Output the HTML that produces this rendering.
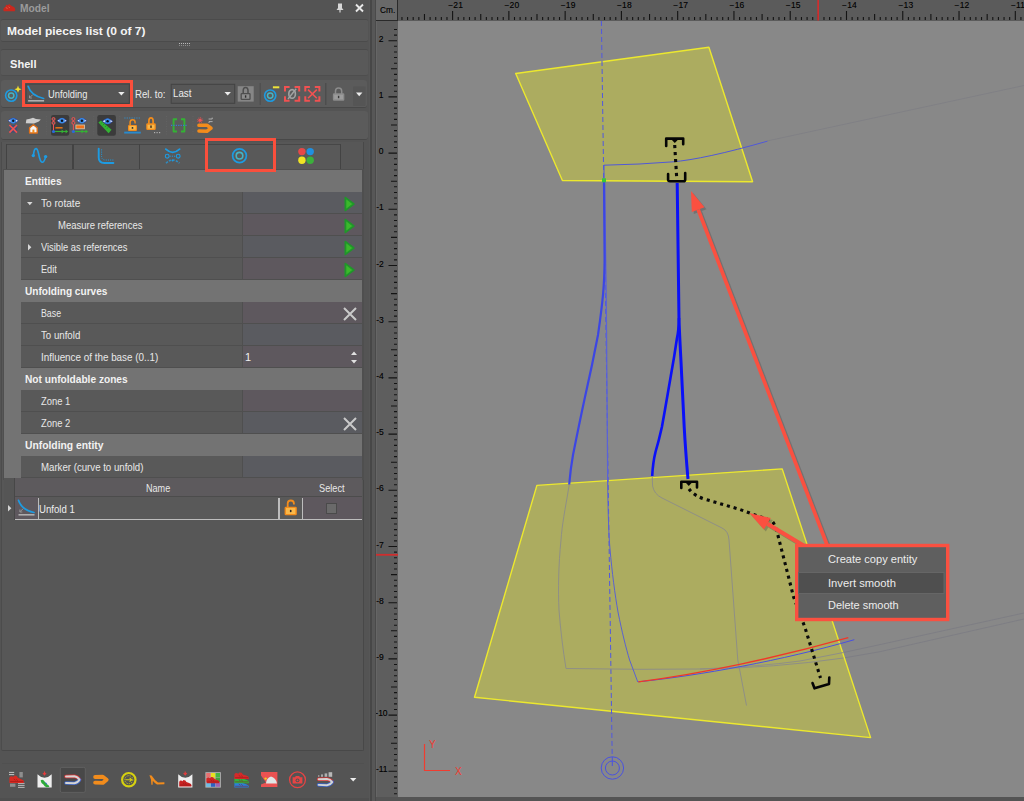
<!DOCTYPE html>
<html>
<head>
<meta charset="utf-8">
<title>Model</title>
<style>
html,body{margin:0;padding:0;}
body{width:1024px;height:801px;overflow:hidden;background:#535353;position:relative;
 font-family:"Liberation Sans",sans-serif;font-size:11px;color:#e6e6e6;}
.abs{position:absolute;}
svg{overflow:visible;}
#left{position:absolute;left:0;top:0;width:369px;height:801px;background:#545454;overflow:hidden;}
.t{position:absolute;white-space:nowrap;line-height:14px;height:14px;transform-origin:0 50%;}
#view{position:absolute;left:376px;top:0;width:648px;height:801px;background:#888888;overflow:hidden;}
</style>
</head>
<body>
<div id="left">
<svg class="abs" style="left:2.5px;top:2.6px" width="12.8" height="9.1" viewBox="0 0 14 10"><path d="M0.5 8.5 Q0 5 2.5 4.5 L3.5 2 L5.5 2.5 L6.5 1 L8.5 2.5 L10 3.5 Q13.5 4.5 13.5 7.5 L13 9 L1 9 Z" fill="#c8281e"/><path d="M3 5 L5 6 M6 4 L7.5 5.5" stroke="#e86a5a" stroke-width="0.8" fill="none"/></svg>
<div class="t" style="left:20px;top:1px;font-weight:bold;color:#9b9b9b;transform:scaleX(0.928);">Model</div>
<svg class="abs" style="left:335px;top:3px" width="10" height="11" viewBox="0 0 10 11"><path d="M3 0.5 H7 V5 L8.5 7 H1.5 L3 5 Z" fill="#d8d8d8"/><path d="M5 7 V9.6" stroke="#d8d8d8" stroke-width="1.2"/></svg>
<svg class="abs" style="left:355px;top:4px" width="9" height="8" viewBox="0 0 9 8"><path d="M1 0.5 L8 7.5 M8 0.5 L1 7.5" stroke="#e8e8e8" stroke-width="1.9" fill="none"/></svg>
<div class="abs" style="left:1px;top:19px;width:367px;height:23px;background:#595959;border-top:1px solid #4b4b4b;border-bottom:1px solid #4b4b4b;box-sizing:border-box;border-radius:2px;"></div>
<div class="t" style="left:6.5px;top:24px;font-weight:bold;color:#f4f4f4;transform:scaleX(1.089);">Model pieces list (0 of 7)</div>
<svg class="abs" style="left:179px;top:43px" width="12" height="3" viewBox="0 0 12 3"><rect x="0" y="0" width="1" height="1" fill="#b8b8b8"/><rect x="0" y="2" width="1" height="1" fill="#8a8a8a"/><rect x="2" y="0" width="1" height="1" fill="#b8b8b8"/><rect x="2" y="2" width="1" height="1" fill="#8a8a8a"/><rect x="4" y="0" width="1" height="1" fill="#b8b8b8"/><rect x="4" y="2" width="1" height="1" fill="#8a8a8a"/><rect x="6" y="0" width="1" height="1" fill="#b8b8b8"/><rect x="6" y="2" width="1" height="1" fill="#8a8a8a"/><rect x="8" y="0" width="1" height="1" fill="#b8b8b8"/><rect x="8" y="2" width="1" height="1" fill="#8a8a8a"/><rect x="10" y="0" width="1" height="1" fill="#b8b8b8"/><rect x="10" y="2" width="1" height="1" fill="#8a8a8a"/></svg>
<div class="abs" style="left:1px;top:49px;width:367px;height:27px;background:#595959;border-top:1px solid #4b4b4b;border-bottom:1px solid #4e4e4e;box-sizing:border-box;border-radius:2px;"></div>
<div class="t" style="left:10px;top:57px;font-weight:bold;color:#f4f4f4;transform:scaleX(1.008);">Shell</div>
<div class="abs" style="left:1px;top:80px;width:365.5px;height:28px;background:#5b5b5b;border-radius:3px;border-bottom:1px solid #484848;box-sizing:border-box;"></div>
<div class="abs" style="left:1px;top:111px;width:366.5px;height:29px;background:#5b5b5b;border-radius:3px;border-bottom:1px solid #484848;box-sizing:border-box;"></div>
<svg class="abs" style="left:0;top:0" width="369" height="801" viewBox="0 0 369 801"><circle cx="11.2" cy="95.6" r="5.6" fill="none" stroke="#1d9be2" stroke-width="1.6"/><circle cx="11.2" cy="95.6" r="2.7" fill="none" stroke="#45b4c4" stroke-width="1.5"/><path d="M18 85.6 L19 88.2 L21.6 89.2 L19 90.2 L18 92.8 L17 90.2 L14.4 89.2 L17 88.2 Z" fill="#f0e030"/><rect x="26" y="84" width="103.3" height="19.4" fill="#555555" stroke="#434343" stroke-width="1"/><path d="M28.1 86.3 Q31.1 95.8 43.6 98.5" fill="none" stroke="#1d9be2" stroke-width="1.7" stroke-linecap="round"/><path d="M28.1 100.8 H44.1" stroke="#b4b4b4" stroke-width="1.5"/><path d="M32.7 94.7 L29.700000000000003 97.7 M29.5 95.5 V98.0 H31.900000000000002" stroke="#9a9a9a" stroke-width="0.9" fill="none"/><path d="M118.2 92.0 H124.60000000000001 L121.4 95.6 Z" fill="#ececec"/><rect x="171.2" y="84.3" width="63.5" height="19" fill="#575757" stroke="#434343" stroke-width="1"/><path d="M224.5 92.0 H230.89999999999998 L227.7 95.6 Z" fill="#ececec"/><rect x="237.7" y="86.2" width="16" height="15.4" fill="#868686"/><path d="M243.2 93.89999999999999 V90.6 a2.4000000000000004 3.1 0 0 1 4.800000000000001 0 V93.89999999999999" fill="none" stroke="#4e4e4e" stroke-width="1.5"/><rect x="241.2" y="93.6" width="8.8" height="5.8" rx="0.6" fill="#8e8e8e" stroke="#4e4e4e" stroke-width="1.3"/><rect x="244.9" y="95.3" width="1.4" height="2.4" fill="#303030"/><path d="M260.2 83 V105" stroke="#4c4c4c" stroke-width="1"/><circle cx="270.2" cy="95.6" r="5.6" fill="none" stroke="#1d9be2" stroke-width="1.6"/><circle cx="270.2" cy="95.6" r="2.7" fill="none" stroke="#45b4c4" stroke-width="1.5"/><rect x="272.9" y="86.3" width="6.4" height="2" fill="#eee43a"/><path d="M285 91.6 V87 H289.6 M294.59999999999997 87 H299.2 V91.6 M299.2 96.2 V100.8 H294.59999999999997 M289.6 100.8 H285 V96.2" fill="none" stroke="#f05252" stroke-width="2"/><ellipse cx="292.1" cy="93.9" rx="3.3" ry="4.3" fill="none" stroke="#a2a2a2" stroke-width="1.6"/><path d="M288 99 L296.2 88.8" stroke="#a2a2a2" stroke-width="1.4"/><path d="M305.3 91.6 V87 H309.90000000000003 M314.79999999999995 87 H319.4 V91.6 M319.4 96.2 V100.8 H314.79999999999995 M309.90000000000003 100.8 H305.3 V96.2" fill="none" stroke="#f05252" stroke-width="2"/><path d="M308 89.6 L316.8 98.3 M316.8 89.6 L308 98.3" stroke="#f05252" stroke-width="1.6"/><path d="M325.8 83 V105" stroke="#484848" stroke-width="1"/><path d="M335.5 94.3 V91 a3.0999999999999996 3.1 0 0 1 6.199999999999999 0 V94.3" fill="none" stroke="#8c8c8c" stroke-width="1.5"/><rect x="333.5" y="94" width="10.2" height="6.0" rx="0.6" fill="#9c9c9c" stroke="#8c8c8c" stroke-width="1.3"/><rect x="337.90000000000003" y="95.8" width="1.4" height="2.4" fill="#3a3a3a"/><rect x="353" y="86.5" width="12.5" height="19.5" fill="#555555" rx="1"/><path d="M356.0 92.60000000000001 H362.4 L359.2 96.2 Z" fill="#ececec"/><path d="M7.8999999999999995 120.8 Q13.2 114.91 18.5 120.8 Q13.2 126.69 7.8999999999999995 120.8 Z" fill="#2c4fb4"/><path d="M8.5 120.8 l2.2 -1.3 v2.6 z M17.9 120.8 l-2.2 -1.3 v2.6 z" fill="#e8eef8"/><circle cx="13.2" cy="120.8" r="2.6" fill="#3b8de6"/><circle cx="13.2" cy="120.8" r="1.2" fill="#101018"/><rect x="9.6" y="125" width="7.6" height="7.6" fill="#2c4688" opacity="0.55"/><path d="M9.4 125 L17 132.6 M17 125 L9.4 132.6" stroke="#f05252" stroke-width="1.7"/><path d="M25.8 123.3 L26.4 119.6 L30 118.8 L33 117.8 L36 119 L40.8 119.4 L38.8 121.6 L34 123.4 Z" fill="#cdcdcd"/><path d="M29.6 133 V127.8 L33.4 124.8 L37.2 127.8 V133 Z" fill="#f4f4f4" stroke="#e0701a" stroke-width="1.4" stroke-linejoin="round"/><rect x="32.4" y="129.6" width="2" height="3.4" fill="#f28c1c"/><path d="M46.7 116 V135" stroke="#666666" stroke-width="1" stroke-dasharray="1 1.5" opacity="0.7"/><rect x="51" y="115.1" width="18.2" height="20.6" rx="2.2" fill="#3b3b3b"/><path d="M53.5 119 V131.5" stroke="#f05252" stroke-width="1"/><circle cx="53.5" cy="119" r="1.5" fill="#585858" stroke="#f05252" stroke-width="1"/><circle cx="53.5" cy="122.9" r="1.5" fill="#585858" stroke="#f05252" stroke-width="1"/><path d="M56.9 120.7 Q62 115.0 67.1 120.7 Q62 126.4 56.9 120.7 Z" fill="#2c4fb4"/><path d="M57.5 120.7 l2.2 -1.3 v2.6 z M66.5 120.7 l-2.2 -1.3 v2.6 z" fill="#e8eef8"/><circle cx="62" cy="120.7" r="2.6" fill="#3b8de6"/><circle cx="62" cy="120.7" r="1.2" fill="#101018"/><path d="M55.4 127.8 H62.6" stroke="#d8701a" stroke-width="1.6"/><path d="M55 131.5 H67.6" stroke="#34b234" stroke-width="1.1"/><path d="M61.6 129.6 L64 131.5 L61.6 133.4 Z M65.6 129.6 L68 131.5 L65.6 133.4 Z" fill="#34b234"/><circle cx="53.5" cy="131.5" r="1.6" fill="#2a6ad8"/><path d="M73.4 119 V131.5" stroke="#f05252" stroke-width="1"/><circle cx="73.4" cy="119" r="1.5" fill="#585858" stroke="#f05252" stroke-width="1"/><circle cx="73.4" cy="122.9" r="1.5" fill="#585858" stroke="#f05252" stroke-width="1"/><path d="M76.80000000000001 120.7 Q81.9 115.0 87.0 120.7 Q81.9 126.4 76.80000000000001 120.7 Z" fill="#2c4fb4"/><path d="M77.4 120.7 l2.2 -1.3 v2.6 z M86.4 120.7 l-2.2 -1.3 v2.6 z" fill="#e8eef8"/><circle cx="81.9" cy="120.7" r="2.6" fill="#3b8de6"/><circle cx="81.9" cy="120.7" r="1.2" fill="#101018"/><rect x="75.9" y="125" width="8.6" height="3.8" fill="#f0721a" stroke="#d8c8b0" stroke-width="0.8"/><path d="M74.9 131.5 H87.5" stroke="#34b234" stroke-width="1.1"/><path d="M81.5 129.6 L83.9 131.5 L81.5 133.4 Z M85.5 129.6 L87.9 131.5 L85.5 133.4 Z" fill="#34b234"/><circle cx="73.4" cy="131.5" r="1.6" fill="#2a6ad8"/><path d="M93.8 116 V135" stroke="#666666" stroke-width="1" stroke-dasharray="1 1.5" opacity="0.7"/><rect x="97.3" y="115.1" width="18.6" height="20.6" rx="2.2" fill="#3b3b3b"/><path d="M98.4 122.6 L100.9 120.6 L111.6 129.8 L108.6 133.3 Z" fill="#34b234"/><path d="M101 123.6 l1.2 -1.4 M103 125.3 l1.2 -1.4 M105 127 l1.2 -1.4 M107 128.7 l1.2 -1.4" stroke="#1c7a1c" stroke-width="0.7"/><path d="M102.1 121.2 Q107.6 115.12 113.1 121.2 Q107.6 127.28 102.1 121.2 Z" fill="#2c4fb4"/><path d="M102.69999999999999 121.2 l2.2 -1.3 v2.6 z M112.5 121.2 l-2.2 -1.3 v2.6 z" fill="#e8eef8"/><circle cx="107.6" cy="121.2" r="2.6" fill="#3b8de6"/><circle cx="107.6" cy="121.2" r="1.2" fill="#101018"/><path d="M119.8 116 V135" stroke="#666666" stroke-width="1" stroke-dasharray="1 1.5" opacity="0.7"/><path d="M124.2 118 H140.8" stroke="#3a86b8" stroke-width="1.2" stroke-dasharray="1.4 1"/><path d="M130.1 125.4 V122.30000000000001 a2.5 2.6 0 0 1 5 0 V123.5" fill="none" stroke="#f28c1c" stroke-width="1.5"/><rect x="128.6" y="125.5" width="7.8" height="4.8" rx="0.6" fill="#f9b84a" stroke="#f28c1c" stroke-width="1.2"/><circle cx="132.5" cy="127.9" r="0.9" fill="#2a2a2a"/><path d="M124.2 132.6 H140.8" stroke="#2a8acc" stroke-width="1.9"/><path d="M148.9 124.3 V121 a2.0999999999999996 3.1 0 0 1 4.199999999999999 0 V124.3" fill="none" stroke="#f28c1c" stroke-width="1.7"/><rect x="146.9" y="124" width="8.2" height="5.4" rx="0.6" fill="#f9b84a" stroke="#f28c1c" stroke-width="1.3"/><rect x="150.3" y="125.5" width="1.4" height="2.4" fill="#3a2a1a"/><rect x="154" y="132" width="1.2" height="1.2" fill="#b0b0b0"/><rect x="156.5" y="132" width="1.2" height="1.2" fill="#b0b0b0"/><rect x="159" y="132" width="1.2" height="1.2" fill="#b0b0b0"/><path d="M166.5 116 V135" stroke="#666666" stroke-width="1" stroke-dasharray="1 1.5" opacity="0.7"/><path d="M177 119.3 H173.6 V131.5 H177 M181 119.3 H184.4 V131.5 H181" fill="none" stroke="#34b234" stroke-width="1.9" stroke-linejoin="round"/><path d="M171 125.4 H187.4" stroke="#3a7ad0" stroke-width="1.1" stroke-dasharray="1.2 1.2"/><path d="M193 116 V135" stroke="#666666" stroke-width="1" stroke-dasharray="1 1.5" opacity="0.7"/><circle cx="200.1" cy="120.2" r="1.7" fill="#f05252"/><circle cx="200.1" cy="120.2" r="2.6" fill="none" stroke="#f05252" stroke-width="0.8" stroke-dasharray="1 1"/><path d="M208.6 119 h3.6 v-1.4 M212.6 121.6 h-3.6 v1.4" stroke="#b8b8b8" stroke-width="0.9" fill="none"/><path d="M198.95 125.35000000000001 L206.92 125.15 L211.04999999999998 128.20000000000002 L206.92 131.25 L198.95 131.05" fill="none" stroke="#f28c1c" stroke-width="3.5" stroke-linejoin="round" stroke-linecap="round"/></svg>
<div class="t" style="left:47.7px;top:87px;color:#ececec;transform:scaleX(0.848);">Unfolding</div>
<div class="t" style="left:134.7px;top:87px;color:#ececec;transform:scaleX(0.875);">Rel. to:</div>
<div class="t" style="left:172.6px;top:86px;color:#ececec;transform:scaleX(0.885);">Last</div>
<div class="abs" style="left:1px;top:142px;width:361.3px;height:608px;background:#575757;border-right:1px solid #484848;border-bottom:1px solid #484848;border-left:1px solid #4c4c4c;border-radius:0 0 2px 2px;"></div>
<div class="abs" style="left:6px;top:144px;width:334px;height:27px;background:#595959;border-top:1px solid #474747;box-sizing:border-box;"></div>
<div class="abs" style="left:5.5px;top:144px;width:1.5px;height:27px;background:#434343;"></div>
<div class="abs" style="left:72.0px;top:144px;width:1.5px;height:27px;background:#434343;"></div>
<div class="abs" style="left:138.5px;top:144px;width:1.5px;height:27px;background:#434343;"></div>
<div class="abs" style="left:205.5px;top:144px;width:1.5px;height:27px;background:#434343;"></div>
<div class="abs" style="left:272.5px;top:144px;width:1.5px;height:27px;background:#434343;"></div>
<div class="abs" style="left:339.5px;top:144px;width:1.5px;height:27px;background:#434343;"></div>
<svg class="abs" style="left:0;top:0" width="369" height="801" viewBox="0 0 369 801"><path d="M33.4 155.6 C33.8 150 35 148.4 36.2 148.6 C38.2 149 38.4 154 39.6 158 C40.6 161.6 41.6 162.6 42.6 162.2 C44 161.6 45 159.6 45.6 156.6" fill="none" stroke="#1d9be2" stroke-width="1.6" stroke-linecap="round"/><circle cx="33.3" cy="155.6" r="1.7" fill="#1d9be2"/><circle cx="45.6" cy="156.6" r="1.7" fill="#1d9be2"/><path d="M98.7 148.6 V157.6 Q98.7 163 104.2 163 H113.4" fill="none" stroke="#1d9be2" stroke-width="1.9" stroke-linecap="round"/><path d="M101.6 149.4 V156.6 Q101.8 160 105.4 160 H113.4" fill="none" stroke="#1d9be2" stroke-width="1" stroke-dasharray="1 1.2"/><path d="M165.8 149.2 Q172.6 155.6 179.6 149.2" fill="none" stroke="#1d9be2" stroke-width="1.8" stroke-linecap="round"/><circle cx="167.2" cy="156.2" r="1.9" fill="none" stroke="#1d9be2" stroke-width="1.1"/><circle cx="178.2" cy="156.2" r="1.9" fill="none" stroke="#1d9be2" stroke-width="1.1"/><path d="M169.6 156.2 H176" stroke="#1d9be2" stroke-width="1" stroke-dasharray="1.2 1"/><path d="M166 163.2 Q172.6 156.8 179.4 163.2" fill="none" stroke="#2f8cc0" stroke-width="1.5" stroke-dasharray="2.4 1.2"/><circle cx="172.6" cy="160.4" r="1" fill="#1d9be2"/><circle cx="239.5" cy="155.7" r="6.9" fill="none" stroke="#1d9be2" stroke-width="1.7"/><circle cx="239.5" cy="155.7" r="3.3" fill="none" stroke="#45b4c4" stroke-width="1.6"/><circle cx="301.9" cy="151.6" r="3.7" fill="#e64848"/><circle cx="310.2" cy="151.6" r="3.7" fill="#2090e0"/><circle cx="301.9" cy="160.3" r="3.7" fill="#f0e424"/><circle cx="310.2" cy="160.3" r="3.7" fill="#3cb03c"/></svg>
<div class="abs" style="left:3px;top:169px;width:361px;height:311px;background:#4f4f4f;"></div>
<div class="abs" style="left:4px;top:170.2px;width:358px;height:22px;background:#737373;"></div>
<div class="t" style="left:24.5px;top:174px;font-weight:bold;color:#f2f2f2;transform:scaleX(0.919);">Entities</div>
<div class="abs" style="left:4px;top:192.2px;width:17px;height:22px;background:#737373;"></div>
<div class="abs" style="left:21px;top:192.2px;width:221.3px;height:21.2px;background:#595959;"></div>
<div class="abs" style="left:243px;top:192.2px;width:119px;height:21.2px;background:#5a5b60;"></div>
<div class="t" style="left:40.8px;top:196px;color:#e8e8e8;transform:scaleX(0.918);">To rotate</div>
<svg class="abs" style="left:26.6px;top:201.79999999999998px" width="5.6" height="3.2" viewBox="0 0 5.6 3.2"><path d="M0 0 H5.6 L2.8 3.2 Z" fill="#d8d8d8"/></svg>
<svg class="abs" style="left:344px;top:195.6px" width="11" height="16" viewBox="0 0 11 16"><path d="M1.4 1.6 L1.4 14.4 L9.8 8 Z" fill="#3cb82c" stroke="#20962a" stroke-width="1.8" stroke-linejoin="round"/></svg>
<div class="abs" style="left:4px;top:214.2px;width:17px;height:22px;background:#737373;"></div>
<div class="abs" style="left:21px;top:214.2px;width:221.3px;height:21.2px;background:#595959;"></div>
<div class="abs" style="left:243px;top:214.2px;width:119px;height:21.2px;background:#5e585e;"></div>
<div class="t" style="left:57.5px;top:218px;color:#e8e8e8;transform:scaleX(0.863);">Measure references</div>
<svg class="abs" style="left:344px;top:217.6px" width="11" height="16" viewBox="0 0 11 16"><path d="M1.4 1.6 L1.4 14.4 L9.8 8 Z" fill="#3cb82c" stroke="#20962a" stroke-width="1.8" stroke-linejoin="round"/></svg>
<div class="abs" style="left:4px;top:236.2px;width:17px;height:22px;background:#737373;"></div>
<div class="abs" style="left:21px;top:236.2px;width:221.3px;height:21.2px;background:#595959;"></div>
<div class="abs" style="left:243px;top:236.2px;width:119px;height:21.2px;background:#5a5b60;"></div>
<div class="t" style="left:40.8px;top:240px;color:#e8e8e8;transform:scaleX(0.847);">Visible as references</div>
<svg class="abs" style="left:28px;top:243.79999999999998px" width="3.4" height="6.4" viewBox="0 0 3.4 6.4"><path d="M0 0 V6.4 L3.4 3.2 Z" fill="#d8d8d8"/></svg>
<svg class="abs" style="left:344px;top:239.6px" width="11" height="16" viewBox="0 0 11 16"><path d="M1.4 1.6 L1.4 14.4 L9.8 8 Z" fill="#3cb82c" stroke="#20962a" stroke-width="1.8" stroke-linejoin="round"/></svg>
<div class="abs" style="left:4px;top:258.2px;width:17px;height:22px;background:#737373;"></div>
<div class="abs" style="left:21px;top:258.2px;width:221.3px;height:21.2px;background:#595959;"></div>
<div class="abs" style="left:243px;top:258.2px;width:119px;height:21.2px;background:#5e585e;"></div>
<div class="t" style="left:40.8px;top:262px;color:#e8e8e8;transform:scaleX(0.834);">Edit</div>
<svg class="abs" style="left:344px;top:261.6px" width="11" height="16" viewBox="0 0 11 16"><path d="M1.4 1.6 L1.4 14.4 L9.8 8 Z" fill="#3cb82c" stroke="#20962a" stroke-width="1.8" stroke-linejoin="round"/></svg>
<div class="abs" style="left:4px;top:280.2px;width:358px;height:22px;background:#737373;"></div>
<div class="t" style="left:24.5px;top:284px;font-weight:bold;color:#f2f2f2;transform:scaleX(0.917);">Unfolding curves</div>
<div class="abs" style="left:4px;top:302.2px;width:17px;height:22px;background:#737373;"></div>
<div class="abs" style="left:21px;top:302.2px;width:221.3px;height:21.2px;background:#595959;"></div>
<div class="abs" style="left:243px;top:302.2px;width:119px;height:21.2px;background:#5e585e;"></div>
<div class="t" style="left:40.8px;top:306px;color:#e8e8e8;transform:scaleX(0.798);">Base</div>
<svg class="abs" style="left:343px;top:306.5px" width="14" height="14" viewBox="0 0 14 14"><path d="M1 1 L13 13 M13 1 L1 13" stroke="#c9c9c9" stroke-width="2" fill="none"/></svg>
<div class="abs" style="left:4px;top:324.2px;width:17px;height:22px;background:#737373;"></div>
<div class="abs" style="left:21px;top:324.2px;width:221.3px;height:21.2px;background:#595959;"></div>
<div class="abs" style="left:243px;top:324.2px;width:119px;height:21.2px;background:#5a5b60;"></div>
<div class="t" style="left:40.8px;top:328px;color:#e8e8e8;transform:scaleX(0.880);">To unfold</div>
<div class="abs" style="left:4px;top:346.2px;width:17px;height:22px;background:#737373;"></div>
<div class="abs" style="left:21px;top:346.2px;width:221.3px;height:21.2px;background:#595959;"></div>
<div class="abs" style="left:243px;top:346.2px;width:119px;height:21.2px;background:#5e585e;"></div>
<div class="t" style="left:40.8px;top:350px;color:#e8e8e8;transform:scaleX(0.896);">Influence of the base (0..1)</div>
<div class="t" style="left:245px;top:350px;color:#f0f0f0;">1</div>
<svg class="abs" style="left:351px;top:351px" width="6" height="13" viewBox="0 0 6 13"><path d="M0 4 L3 0.5 L6 4 Z M0 9 L3 12.5 L6 9 Z" fill="#e0e0e0"/></svg>
<div class="abs" style="left:4px;top:368.2px;width:358px;height:22px;background:#737373;"></div>
<div class="t" style="left:24.5px;top:372px;font-weight:bold;color:#f2f2f2;transform:scaleX(0.923);">Not unfoldable zones</div>
<div class="abs" style="left:4px;top:390.2px;width:17px;height:22px;background:#737373;"></div>
<div class="abs" style="left:21px;top:390.2px;width:221.3px;height:21.2px;background:#595959;"></div>
<div class="abs" style="left:243px;top:390.2px;width:119px;height:21.2px;background:#5e585e;"></div>
<div class="t" style="left:40.8px;top:394px;color:#e8e8e8;transform:scaleX(0.856);">Zone 1</div>
<div class="abs" style="left:4px;top:412.2px;width:17px;height:22px;background:#737373;"></div>
<div class="abs" style="left:21px;top:412.2px;width:221.3px;height:21.2px;background:#595959;"></div>
<div class="abs" style="left:243px;top:412.2px;width:119px;height:21.2px;background:#5a5b60;"></div>
<div class="t" style="left:40.8px;top:416px;color:#e8e8e8;transform:scaleX(0.856);">Zone 2</div>
<svg class="abs" style="left:343px;top:416.5px" width="14" height="14" viewBox="0 0 14 14"><path d="M1 1 L13 13 M13 1 L1 13" stroke="#c9c9c9" stroke-width="2" fill="none"/></svg>
<div class="abs" style="left:4px;top:434.2px;width:358px;height:22px;background:#737373;"></div>
<div class="t" style="left:24.5px;top:438px;font-weight:bold;color:#f2f2f2;transform:scaleX(0.938);">Unfolding entity</div>
<div class="abs" style="left:4px;top:456.2px;width:17px;height:22px;background:#737373;"></div>
<div class="abs" style="left:21px;top:456.2px;width:221.3px;height:21.2px;background:#595959;"></div>
<div class="abs" style="left:243px;top:456.2px;width:119px;height:21.2px;background:#5a5b60;"></div>
<div class="t" style="left:40.8px;top:460px;color:#e8e8e8;transform:scaleX(0.877);">Marker (curve to unfold)</div>
<div class="abs" style="left:4px;top:478px;width:358px;height:19px;background:#5d5a5d;border-bottom:1px solid #4c4c4c;box-sizing:border-box;"></div>
<div class="abs" style="left:4px;top:478px;width:11px;height:42px;background:#555555;"></div>
<div class="abs" style="left:14px;top:478px;width:1px;height:42px;background:#474747;"></div>
<div class="t" style="left:145.6px;top:481px;color:#e8e8e8;transform:scaleX(0.825);">Name</div>
<div class="t" style="left:318.9px;top:481px;color:#e8e8e8;transform:scaleX(0.837);">Select</div>
<div class="abs" style="left:15px;top:497px;width:263px;height:22px;background:#595959;"></div>
<div class="abs" style="left:15px;top:497px;width:23px;height:22px;background:#5e585e;"></div>
<div class="abs" style="left:278px;top:497px;width:24px;height:22px;background:#595959;"></div>
<div class="abs" style="left:302px;top:497px;width:60px;height:22px;background:#5e585e;"></div>
<div class="abs" style="left:15px;top:519px;width:347px;height:1px;background:#bdbdbd;"></div>
<div class="abs" style="left:37.5px;top:498px;width:1.5px;height:21px;background:#bdbdbd;"></div>
<div class="abs" style="left:278px;top:498px;width:1.5px;height:21px;background:#bdbdbd;"></div>
<div class="abs" style="left:301.5px;top:498px;width:1.5px;height:21px;background:#bdbdbd;"></div>
<svg class="abs" style="left:8px;top:505px" width="3.4" height="6.6" viewBox="0 0 3.4 6.6"><path d="M0 0 V6.6 L3.4 3.3 Z" fill="#d4d4d4"/></svg>
<svg class="abs" style="left:0;top:0" width="369" height="801" viewBox="0 0 369 801"><path d="M18.5 500.3 Q21.5 509.8 34.0 512.5" fill="none" stroke="#1d9be2" stroke-width="1.7" stroke-linecap="round"/><path d="M18.5 514.8 H34.5" stroke="#b4b4b4" stroke-width="1.5"/><path d="M23.1 508.7 L20.1 511.7 M19.9 509.5 V512.0 H22.3" stroke="#9a9a9a" stroke-width="0.9" fill="none"/><path d="M287.7 507.6 V503.6 a3.1 3.1 0 0 1 6.2 0 V504.6" fill="none" stroke="#f28c1c" stroke-width="1.8"/><rect x="285.3" y="507.4" width="10.8" height="7.2" rx="0.7" fill="#f9b84a" stroke="#f28c1c" stroke-width="1.4"/><ellipse cx="290.7" cy="511" rx="0.9" ry="1.3" fill="#2a2a2a"/></svg>
<div class="t" style="left:39.3px;top:502px;color:#eeeeee;transform:scaleX(0.874);">Unfold 1</div>
<div class="abs" style="left:326px;top:503px;width:11px;height:11px;background:#6a6a6a;border:1px solid #4a4a4a;box-sizing:border-box;"></div>
<div class="abs" style="left:205px;top:138px;width:71px;height:34px;background:transparent;border:3.5px solid #fa4f3c;box-sizing:border-box;"></div>
<div class="abs" style="left:22px;top:80px;width:111.3px;height:27.2px;background:transparent;border:3.6px solid #fa4f3c;box-sizing:border-box;"></div>
<div class="abs" style="left:2px;top:763px;width:362px;height:1px;background:#505050;"></div>
<div class="abs" style="left:0px;top:798px;width:369px;height:3px;background:#4f4f4f;"></div>
<svg class="abs" style="left:0;top:0" width="369" height="801" viewBox="0 0 369 801"><path d="M9 772.4 H14.2 M9 774.6 H14.2" stroke="#c4c4c4" stroke-width="1"/><rect x="19.4" y="772" width="3.4" height="5.4" fill="#8e8e8e"/><rect x="10" y="783.6" width="5.4" height="3.2" fill="#8e8e8e"/><path d="M18 783.4 H24.6 M18 785.4 H24.6 M18 787.4 H24.6" stroke="#b8b8b8" stroke-width="1"/><path d="M9.4 783.0 L9.4 777.82 Q9.984 775.97 11.736 776.192 L13.196 777.08 L14.364 775.6 L16.7 776.044 L17.868000000000002 777.82 L21.08 779.152 Q24.0 779.892 24.0 781.816 L23.7 783.0 Z" fill="#d62a22"/><path d="M13.780000000000001 778.9300000000001 l1.752 1.4800000000000002 M16.116 779.3000000000001 l1.752 1.4800000000000002 M10.13 781.52 H23.27" stroke="#8c1414" stroke-width="0.7" opacity="0.7"/><path d="M37.5 774.2 Q44.5 781.4 51.7 774.2 V787.4 H37.5 Z" fill="#eeeeee"/><path d="M44.5 771.4 v3 m-1.6 -1.4 l1.6 1.8 l1.6 -1.8" stroke="#e83a3a" stroke-width="1.1" fill="none"/><path d="M40.6 780.6 Q42 779 43.8 780.4 L46.6 784 Q49.6 785.4 49.4 787 L46.4 787.2 Q44.4 786.6 43.4 784.6 Q41 783.4 40.6 780.6 Z" fill="#2eaa3a"/><path d="M45.6 782.4 l1.4 1.8" stroke="#3a6ad0" stroke-width="0.9"/><rect x="60.3" y="767.4" width="25" height="25" rx="1.5" fill="#484848" stroke="#606060" stroke-width="1"/><path d="M66 776.5 L74.3 776.2 Q77.71 776.6 79.5 779.75" fill="none" stroke="#d83030" stroke-width="3.6" stroke-linecap="round"/><path d="M66 783.0 L74.3 783.3 Q77.71 782.9 79.5 779.75" fill="none" stroke="#3a62c0" stroke-width="3.6" stroke-linecap="round"/><path d="M66 776.5 L74.3 776.2 Q77.71 776.6 79.5 779.75 M66 783.0 L74.3 783.3 Q77.71 782.9 79.5 779.75" fill="none" stroke="#d4d4d4" stroke-width="1.9" stroke-linecap="round"/><path d="M95.15 776.95 L102.8 776.75 L106.65 779.8 L102.8 782.8499999999999 L95.15 782.6499999999999" fill="none" stroke="#f28c1c" stroke-width="3.9" stroke-linejoin="round" stroke-linecap="round"/><circle cx="128.8" cy="779.7" r="6.7" fill="none" stroke="#d6d010" stroke-width="2.2"/><circle cx="128.8" cy="779.7" r="4" fill="none" stroke="#d6d010" stroke-width="0.8" stroke-dasharray="1.4 1"/><path d="M125.4 779.7 H131.6 M129.6 777.8 L131.8 779.7 L129.6 781.6" stroke="#d6d010" stroke-width="1.1" fill="none"/><path d="M149.4 775.2 L151.6 775.6 Q154.6 780.4 158 782.4 L164.4 782.2 L164.4 784.2 L157 784.4 Q154.4 783 152.8 780.8 L152.6 784.8 L151.4 784.8 L151 779.4 Z" fill="#f28c1c"/><path d="M178.2 774.2 Q185.2 781.4 192.39999999999998 774.2 V787.4 H178.2 Z" fill="#eeeeee"/><path d="M185.2 771.4 v3 m-1.6 -1.4 l1.6 1.8 l1.6 -1.8" stroke="#e83a3a" stroke-width="1.1" fill="none"/><path d="M179.2 786.4 L179.2 781.92 Q179.696 780.32 181.184 780.512 L182.42399999999998 781.28 L183.416 780 L185.39999999999998 780.384 L186.392 781.92 L189.12 783.072 Q191.6 783.712 191.6 785.376 L191.29999999999998 786.4 Z" fill="#c82222"/><path d="M182.92 782.88 l1.488 1.2800000000000002 M184.904 783.2 l1.488 1.2800000000000002 M179.82 785.12 H190.98" stroke="#8c1414" stroke-width="0.7" opacity="0.7"/><rect x="205.4" y="772.2" width="15.4" height="15.4" fill="#b8b8b8"/><rect x="206.2" y="773.0" width="4.4" height="4.4" fill="#e87070"/><rect x="210.9" y="773.0" width="4.4" height="4.4" fill="#e8e020"/><rect x="215.6" y="773.0" width="4.4" height="4.4" fill="#44b444"/><rect x="206.2" y="777.7" width="4.4" height="4.4" fill="#d86060"/><rect x="210.9" y="777.7" width="4.4" height="4.4" fill="#d0c030"/><rect x="215.6" y="777.7" width="4.4" height="4.4" fill="#40a040"/><rect x="206.2" y="782.4" width="4.4" height="4.4" fill="#6cbce4"/><rect x="210.9" y="782.4" width="4.4" height="4.4" fill="#2c62c4"/><rect x="215.6" y="782.4" width="4.4" height="4.4" fill="#9c64b4"/><path d="M206.6 783.2 L206.6 778.86 Q207.12 777.31 208.68 777.496 L209.98 778.24 L211.01999999999998 777 L213.1 777.372 L214.14 778.86 L217.0 779.976 Q219.6 780.596 219.6 782.208 L219.29999999999998 783.2 Z" fill="#d02626"/><path d="M210.5 779.79 l1.56 1.2400000000000002 M212.57999999999998 780.1 l1.56 1.2400000000000002 M207.25 781.96 H218.95" stroke="#8c1414" stroke-width="0.7" opacity="0.7"/><path d="M234.4 787.6 L234.4 782.98 Q234.984 781.33 236.73600000000002 781.528 L238.196 782.32 L239.364 781 L241.70000000000002 781.396 L242.868 782.98 L246.08 784.168 Q249.0 784.828 249.0 786.544 L248.7 787.6 Z" fill="#2a80d8"/><path d="M238.78 783.97 l1.752 1.32 M241.116 784.3 l1.752 1.32 M235.13 786.28 H248.27" stroke="#8c1414" stroke-width="0.7" opacity="0.7"/><path d="M234.4 783.2 L234.4 778.58 Q234.984 776.9300000000001 236.73600000000002 777.128 L238.196 777.9200000000001 L239.364 776.6 L241.70000000000002 776.996 L242.868 778.58 L246.08 779.768 Q249.0 780.428 249.0 782.144 L248.7 783.2 Z" fill="#34b040"/><path d="M238.78 779.57 l1.752 1.32 M241.116 779.9 l1.752 1.32 M235.13 781.88 H248.27" stroke="#8c1414" stroke-width="0.7" opacity="0.7"/><path d="M234.4 779.0 L234.4 774.38 Q234.984 772.73 236.73600000000002 772.928 L238.196 773.72 L239.364 772.4 L241.70000000000002 772.7959999999999 L242.868 774.38 L246.08 775.568 Q249.0 776.228 249.0 777.944 L248.7 779.0 Z" fill="#d42a2a"/><path d="M238.78 775.37 l1.752 1.32 M241.116 775.6999999999999 l1.752 1.32 M235.13 777.68 H248.27" stroke="#8c1414" stroke-width="0.7" opacity="0.7"/><rect x="261" y="772" width="16.4" height="15" fill="#ea5252"/><path d="M261 775.6 L266 782.6 L261 784.4 Z" fill="#5a5a5a"/><path d="M266 783.6 Q266.4 777.6 271 776.4 Q276 777.6 277 783.6 Z" fill="#dfe6e6"/><circle cx="265.6" cy="778.6" r="1.2" fill="#f0d020"/><circle cx="297.5" cy="779.8" r="7.9" fill="none" stroke="#e64444" stroke-width="1.3"/><path d="M292.6 777.2 H295 L295.8 776 H299.2 L300 777.2 H302.4 V783.6 H292.6 Z" fill="#e64444"/><circle cx="297.5" cy="780.3" r="1.9" fill="#555555"/><circle cx="297.5" cy="780.3" r="0.9" fill="#e64444"/><rect x="318" y="775.2" width="1.4" height="1.6" fill="#a0a0a0"/><rect x="321" y="774.4" width="2" height="2.4" fill="#a8a8a8"/><rect x="324.6" y="773.4" width="2.6" height="3.4" fill="#b0b0b0"/><rect x="328.6" y="772.2" width="3.6" height="4.6" fill="#b8b8b8"/><path d="M318.6 779.3 L326.96000000000004 779.0 Q330.392 779.4 332.20000000000005 782.0999999999999" fill="none" stroke="#d83030" stroke-width="3.6" stroke-linecap="round"/><path d="M318.6 784.9 L326.96000000000004 785.1999999999999 Q330.392 784.8 332.20000000000005 782.0999999999999" fill="none" stroke="#3a62c0" stroke-width="3.6" stroke-linecap="round"/><path d="M318.6 779.3 L326.96000000000004 779.0 Q330.392 779.4 332.20000000000005 782.0999999999999 M318.6 784.9 L326.96000000000004 785.1999999999999 Q330.392 784.8 332.20000000000005 782.0999999999999" fill="none" stroke="#d4d4d4" stroke-width="1.9" stroke-linecap="round"/><path d="M350.0 778.0 H356.4 L353.2 781.5999999999999 Z" fill="#ececec"/></svg>
</div>
<div class="abs" style="left:369px;top:0;width:7px;height:801px;background:#575757;"><div class="abs" style="left:1px;top:0;width:1.6px;height:801px;background:#474747"></div><div class="abs" style="left:6.4px;top:0;width:0.6px;height:801px;background:#4a4a4a"></div></div>
<div id="view">
<svg class="abs" style="left:0;top:0" width="648" height="801" viewBox="0 0 648 801"><g transform="translate(-376,0)"><path d="M767 141 L1024 85.5" stroke="#808085" stroke-width="1" fill="none"/><path d="M843.5 652.5 L880 644.6 L1024 613 M843.5 658 L880 651.7 L1024 619" stroke="#7e7e84" stroke-width="1" fill="none"/><polygon points="515.7,73.5 708.9,47.3 752.6,181.7 562.4,180.5" fill="#acac60" stroke="#ece82e" stroke-width="1.4" stroke-linejoin="round"/><polygon points="536.9,485.4 782.2,468.9 870.6,737.6 474.5,697.3" fill="#acac60" stroke="#ece82e" stroke-width="1.4" stroke-linejoin="round"/><path d="M604 180 L604 165.2 Q640 164.5 672 161.9 T767.3 141.2" stroke="#5058d8" stroke-width="1" fill="none"/><path d="M601.4 21 L612.2 757" stroke="#5058e0" stroke-width="1" stroke-dasharray="5 3" fill="none"/><path d="M604.6 181 L606.3 300 L607.7 485" stroke="#5a62d8" stroke-width="1.2" fill="none"/><path d="M569.2 485 C565 510 562 525 561 540 C558.5 565 558 590 559 610 C560.5 630 563 650 566 668.5 L640 669.3 L700 669 Q760 666.5 800 661 L843.5 652.5 M700 669 Q775 668 843.5 658" stroke="#8f8f86" stroke-width="1" fill="none"/><path d="M652.2 476 L652.6 486 Q654 494 662 498 L722 528 Q728.5 531 729 540 L737.8 660 L746.5 705.5" stroke="#8f8f86" stroke-width="1" fill="none"/><path d="M607.7 485 C608 510 608.7 535 610 549 C612 572 615 595 618 612 C622 632 626 648 629.6 660 L637.8 682 " stroke="#5a62d0" stroke-width="1" fill="none"/><path d="M638.3 681.8 C700 675.5 782 660.5 854.3 639.7" stroke="#4a50e0" stroke-width="1" fill="none"/><path d="M638.3 681.8 C700 674 780 657 848.3 637.7" stroke="#f03828" stroke-width="1.3" fill="none"/><path d="M604 181 L604.6 260 C604.4 285 603 300 598 335 C594 356 590 375 585 397 C580 420 576 440 573 455 C571 466 570 475 569.2 484.5" stroke="#3c46e4" stroke-width="2.2" fill="none"/><path d="M677.2 183 L679 320 C680 345 681 360 681.7 376 C682.8 400 683.6 415 684.2 427 C685.2 445 686.5 462 688 479" stroke="#0a10f8" stroke-width="3" fill="none"/><path d="M679 318 C678.6 330 678 334 677 338 C675 352 673 364 670.8 376 C668 392 665 410 661.9 427 C659 440 657 447 655.5 452 C653.5 460 652.6 468 652.2 476" stroke="#0a10f8" stroke-width="2.6" fill="none"/><rect x="602" y="178.3" width="4" height="4" fill="#38c838"/><path d="M674.7 145 L676.6 176.5" stroke="#0a0a0a" stroke-width="3.1" stroke-dasharray="3.1 3.9" fill="none"/><path d="M689 489 Q694 496 706 499.5 L740 509.5 L772 521 Q776 526 777.5 533.6 L793.6 597 L805 627.6 L820.5 678" stroke="#0a0a0a" stroke-width="3.1" stroke-dasharray="3.1 3.9" fill="none"/><path d="M666.2 146 V138.6 H683.2 V144.2" stroke="#050505" stroke-width="2.6" fill="none" stroke-linejoin="round" stroke-linecap="round"/><path d="M671.4 139.5 h6.8 l-3.4 3.6 z" fill="#050505"/><path d="M668.1 174 V180 Q668.3 181.3 670 181.3 H683.5 Q685.2 181.3 685.2 179.5 V173" stroke="#050505" stroke-width="2.6" fill="none" stroke-linejoin="round" stroke-linecap="round"/><path d="M681.3 488 V481.8 H697 V487.5" stroke="#050505" stroke-width="2.6" fill="none" stroke-linejoin="round" stroke-linecap="round"/><path d="M685.5 482.5 h6.5 l-3.2 3.6 z" fill="#050505"/><path d="M812.5 683 L814.5 688.3 L829 684 L829.3 677.5" stroke="#050505" stroke-width="2.6" fill="none" stroke-linejoin="round" stroke-linecap="round"/><circle cx="612.4" cy="768" r="11.2" fill="none" stroke="#4a52e0" stroke-width="1"/><circle cx="612.4" cy="768" r="7" fill="none" stroke="#4a52e0" stroke-width="1"/><path d="M612.3 757 V766" stroke="#4a52e0" stroke-width="1"/><path d="M424.5 744 V770.5 H450" stroke="#f03c30" stroke-width="1.2" fill="none"/><text x="429" y="748" font-family="Liberation Sans, sans-serif" font-size="10" fill="#f03c30">Y</text><text x="455" y="774.5" font-family="Liberation Sans, sans-serif" font-size="10" fill="#f03c30">X</text><g opacity="0.35" transform="translate(2,2)"><path d="M829.0 550.0 L698.2 209.7" stroke="#4a4a4a" stroke-width="3.7" fill="none"/><polygon points="691.0,191.0 704.5,207.2 691.8,212.1" fill="#4a4a4a"/></g><g opacity="0.35" transform="translate(2,2)"><path d="M811.0 550.0 L767.3 523.8" stroke="#4a4a4a" stroke-width="4.2" fill="none"/><polygon points="749.3,513.0 770.8,518.0 763.8,529.6" fill="#4a4a4a"/></g><g opacity="1" transform="translate(0,0)"><path d="M829.0 550.0 L698.2 209.7" stroke="#fa5040" stroke-width="3.7" fill="none"/><polygon points="691.0,191.0 704.5,207.2 691.8,212.1" fill="#fa5040"/></g><g opacity="1" transform="translate(0,0)"><path d="M811.0 550.0 L767.3 523.8" stroke="#fa5040" stroke-width="4.2" fill="none"/><polygon points="749.3,513.0 770.8,518.0 763.8,529.6" fill="#fa5040"/></g><rect x="796.7" y="545.5" width="151" height="74" fill="#5f5f5f" stroke="#fa5040" stroke-width="3.4"/><rect x="798.5" y="572.5" width="145.5" height="21" fill="#4f4f4f" stroke="#666666" stroke-width="1"/></g></svg>
<div class="t" style="left:451.70000000000005px;top:551.5px;color:#ececec;transform:scaleX(1.007);">Create copy entity</div>
<div class="t" style="left:451.70000000000005px;top:576px;color:#ececec;transform:scaleX(1.019);">Invert smooth</div>
<div class="t" style="left:451.70000000000005px;top:598px;color:#ececec;transform:scaleX(0.997);">Delete smooth</div>
<svg class="abs" style="left:0;top:0" width="648" height="801" viewBox="0 0 648 801"><g transform="translate(-376,0)"><rect x="398" y="0" width="626" height="21" fill="#5b5b5b"/><rect x="376" y="21" width="22" height="780" fill="#5e5e5e"/><rect x="376" y="21" width="1" height="780" fill="#666666"/><rect x="376" y="0" width="22" height="21" fill="#696969"/><path d="M376 20.5 H398 M397.5 0 V21" stroke="#2a2a2a" stroke-width="1" fill="none"/><path d="M401.96 17 V20 M407.58 17 V20 M413.21 17 V20 M418.84 17 V20 M424.47 14 V20 M430.09 17 V20 M435.72 17 V20 M441.35 17 V20 M446.97 17 V20 M452.60 11 V20 M458.23 17 V20 M463.85 17 V20 M469.48 17 V20 M475.11 17 V20 M480.74 14 V20 M486.36 17 V20 M491.99 17 V20 M497.62 17 V20 M503.24 17 V20 M508.87 11 V20 M514.50 17 V20 M520.12 17 V20 M525.75 17 V20 M531.38 17 V20 M537.00 14 V20 M542.63 17 V20 M548.26 17 V20 M553.89 17 V20 M559.51 17 V20 M565.14 11 V20 M570.77 17 V20 M576.39 17 V20 M582.02 17 V20 M587.65 17 V20 M593.28 14 V20 M598.90 17 V20 M604.53 17 V20 M610.16 17 V20 M615.78 17 V20 M621.41 11 V20 M627.04 17 V20 M632.66 17 V20 M638.29 17 V20 M643.92 17 V20 M649.55 14 V20 M655.17 17 V20 M660.80 17 V20 M666.43 17 V20 M672.05 17 V20 M677.68 11 V20 M683.31 17 V20 M688.93 17 V20 M694.56 17 V20 M700.19 17 V20 M705.82 14 V20 M711.44 17 V20 M717.07 17 V20 M722.70 17 V20 M728.32 17 V20 M733.95 11 V20 M739.58 17 V20 M745.20 17 V20 M750.83 17 V20 M756.46 17 V20 M762.09 14 V20 M767.71 17 V20 M773.34 17 V20 M778.97 17 V20 M784.59 17 V20 M790.22 11 V20 M795.85 17 V20 M801.47 17 V20 M807.10 17 V20 M812.73 17 V20 M818.36 14 V20 M823.98 17 V20 M829.61 17 V20 M835.24 17 V20 M840.86 17 V20 M846.49 11 V20 M852.12 17 V20 M857.74 17 V20 M863.37 17 V20 M869.00 17 V20 M874.62 14 V20 M880.25 17 V20 M885.88 17 V20 M891.51 17 V20 M897.13 17 V20 M902.76 11 V20 M908.39 17 V20 M914.01 17 V20 M919.64 17 V20 M925.27 17 V20 M930.89 14 V20 M936.52 17 V20 M942.15 17 V20 M947.78 17 V20 M953.40 17 V20 M959.03 11 V20 M964.66 17 V20 M970.28 17 V20 M975.91 17 V20 M981.54 17 V20 M987.17 14 V20 M992.79 17 V20 M998.42 17 V20 M1004.05 17 V20 M1009.67 17 V20 M1015.30 11 V20 M1020.93 17 V20 M394 29.46 H397 M394 35.08 H397 M388.5 40.70 H397 M394 46.32 H397 M394 51.94 H397 M394 57.56 H397 M394 63.18 H397 M391 68.80 H397 M394 74.42 H397 M394 80.04 H397 M394 85.66 H397 M394 91.28 H397 M388.5 96.90 H397 M394 102.52 H397 M394 108.14 H397 M394 113.76 H397 M394 119.38 H397 M391 125.00 H397 M394 130.62 H397 M394 136.24 H397 M394 141.86 H397 M394 147.48 H397 M388.5 153.10 H397 M394 158.72 H397 M394 164.34 H397 M394 169.96 H397 M394 175.58 H397 M391 181.20 H397 M394 186.82 H397 M394 192.44 H397 M394 198.06 H397 M394 203.68 H397 M388.5 209.30 H397 M394 214.92 H397 M394 220.54 H397 M394 226.16 H397 M394 231.78 H397 M391 237.40 H397 M394 243.02 H397 M394 248.64 H397 M394 254.26 H397 M394 259.88 H397 M388.5 265.50 H397 M394 271.12 H397 M394 276.74 H397 M394 282.36 H397 M394 287.98 H397 M391 293.60 H397 M394 299.22 H397 M394 304.84 H397 M394 310.46 H397 M394 316.08 H397 M388.5 321.70 H397 M394 327.32 H397 M394 332.94 H397 M394 338.56 H397 M394 344.18 H397 M391 349.80 H397 M394 355.42 H397 M394 361.04 H397 M394 366.66 H397 M394 372.28 H397 M388.5 377.90 H397 M394 383.52 H397 M394 389.14 H397 M394 394.76 H397 M394 400.38 H397 M391 406.00 H397 M394 411.62 H397 M394 417.24 H397 M394 422.86 H397 M394 428.48 H397 M388.5 434.10 H397 M394 439.72 H397 M394 445.34 H397 M394 450.96 H397 M394 456.58 H397 M391 462.20 H397 M394 467.82 H397 M394 473.44 H397 M394 479.06 H397 M394 484.68 H397 M388.5 490.30 H397 M394 495.92 H397 M394 501.54 H397 M394 507.16 H397 M394 512.78 H397 M391 518.40 H397 M394 524.02 H397 M394 529.64 H397 M394 535.26 H397 M394 540.88 H397 M388.5 546.50 H397 M394 552.12 H397 M394 557.74 H397 M394 563.36 H397 M394 568.98 H397 M391 574.60 H397 M394 580.22 H397 M394 585.84 H397 M394 591.46 H397 M394 597.08 H397 M388.5 602.70 H397 M394 608.32 H397 M394 613.94 H397 M394 619.56 H397 M394 625.18 H397 M391 630.80 H397 M394 636.42 H397 M394 642.04 H397 M394 647.66 H397 M394 653.28 H397 M388.5 658.90 H397 M394 664.52 H397 M394 670.14 H397 M394 675.76 H397 M394 681.38 H397 M391 687.00 H397 M394 692.62 H397 M394 698.24 H397 M394 703.86 H397 M394 709.48 H397 M388.5 715.10 H397 M394 720.72 H397 M394 726.34 H397 M394 731.96 H397 M394 737.58 H397 M391 743.20 H397 M394 748.82 H397 M394 754.44 H397 M394 760.06 H397 M394 765.68 H397 M388.5 771.30 H397 M394 776.92 H397 M394 782.54 H397 M394 788.16 H397 M394 793.78 H397 " stroke="#141414" stroke-width="1.1" fill="none"/><rect x="817.3" y="0" width="1.7" height="20.5" fill="#cf2e2e"/><rect x="376" y="553.9" width="22" height="1.8" fill="#cf2e2e"/><rect x="376" y="797" width="648" height="4" fill="#545454"/></g></svg>
<div class="t" style="left:3.8000000000000114px;top:2.5px;font-size:8.5px;color:#050505;transform:scaleX(0.976);text-shadow:0 0 0.5px rgba(0,0,0,0.45);">Cm.</div>
<div class="t" style="left:72.2px;top:-2px;font-size:8.5px;color:#050505;letter-spacing:0.15px;text-shadow:0 0 0.5px rgba(0,0,0,0.45);">−21</div>
<div class="t" style="left:128.5px;top:-2px;font-size:8.5px;color:#050505;letter-spacing:0.15px;text-shadow:0 0 0.5px rgba(0,0,0,0.45);">−20</div>
<div class="t" style="left:184.7px;top:-2px;font-size:8.5px;color:#050505;letter-spacing:0.15px;text-shadow:0 0 0.5px rgba(0,0,0,0.45);">−19</div>
<div class="t" style="left:241.0px;top:-2px;font-size:8.5px;color:#050505;letter-spacing:0.15px;text-shadow:0 0 0.5px rgba(0,0,0,0.45);">−18</div>
<div class="t" style="left:297.3px;top:-2px;font-size:8.5px;color:#050505;letter-spacing:0.15px;text-shadow:0 0 0.5px rgba(0,0,0,0.45);">−17</div>
<div class="t" style="left:353.6px;top:-2px;font-size:8.5px;color:#050505;letter-spacing:0.15px;text-shadow:0 0 0.5px rgba(0,0,0,0.45);">−16</div>
<div class="t" style="left:409.8px;top:-2px;font-size:8.5px;color:#050505;letter-spacing:0.15px;text-shadow:0 0 0.5px rgba(0,0,0,0.45);">−15</div>
<div class="t" style="left:466.1px;top:-2px;font-size:8.5px;color:#050505;letter-spacing:0.15px;text-shadow:0 0 0.5px rgba(0,0,0,0.45);">−14</div>
<div class="t" style="left:522.4px;top:-2px;font-size:8.5px;color:#050505;letter-spacing:0.15px;text-shadow:0 0 0.5px rgba(0,0,0,0.45);">−13</div>
<div class="t" style="left:578.6px;top:-2px;font-size:8.5px;color:#050505;letter-spacing:0.15px;text-shadow:0 0 0.5px rgba(0,0,0,0.45);">−12</div>
<div class="t" style="left:634.9px;top:-2px;font-size:8.5px;color:#050505;letter-spacing:0.15px;text-shadow:0 0 0.5px rgba(0,0,0,0.45);">−11</div>
<div class="t" style="left:2.7px;top:31.700000000000003px;font-size:8.5px;color:#050505;text-shadow:0 0 0.5px rgba(0,0,0,0.45);">2</div>
<div class="t" style="left:2.7px;top:87.9px;font-size:8.5px;color:#050505;text-shadow:0 0 0.5px rgba(0,0,0,0.45);">1</div>
<div class="t" style="left:2.7px;top:144.1px;font-size:8.5px;color:#050505;text-shadow:0 0 0.5px rgba(0,0,0,0.45);">0</div>
<div class="t" style="left:0.2px;top:200.3px;font-size:8.5px;color:#050505;text-shadow:0 0 0.5px rgba(0,0,0,0.45);">-1</div>
<div class="t" style="left:0.2px;top:256.5px;font-size:8.5px;color:#050505;text-shadow:0 0 0.5px rgba(0,0,0,0.45);">-2</div>
<div class="t" style="left:0.2px;top:312.7px;font-size:8.5px;color:#050505;text-shadow:0 0 0.5px rgba(0,0,0,0.45);">-3</div>
<div class="t" style="left:0.2px;top:368.9px;font-size:8.5px;color:#050505;text-shadow:0 0 0.5px rgba(0,0,0,0.45);">-4</div>
<div class="t" style="left:0.2px;top:425.1px;font-size:8.5px;color:#050505;text-shadow:0 0 0.5px rgba(0,0,0,0.45);">-5</div>
<div class="t" style="left:0.2px;top:481.3px;font-size:8.5px;color:#050505;text-shadow:0 0 0.5px rgba(0,0,0,0.45);">-6</div>
<div class="t" style="left:0.2px;top:537.5px;font-size:8.5px;color:#050505;text-shadow:0 0 0.5px rgba(0,0,0,0.45);">-7</div>
<div class="t" style="left:0.2px;top:593.7px;font-size:8.5px;color:#050505;text-shadow:0 0 0.5px rgba(0,0,0,0.45);">-8</div>
<div class="t" style="left:0.2px;top:649.9px;font-size:8.5px;color:#050505;text-shadow:0 0 0.5px rgba(0,0,0,0.45);">-9</div>
<div class="t" style="left:-0.7px;top:706.1px;font-size:8.5px;color:#050505;text-shadow:0 0 0.5px rgba(0,0,0,0.45);">-10</div>
<div class="t" style="left:-0.1px;top:762.3px;font-size:8.5px;color:#050505;text-shadow:0 0 0.5px rgba(0,0,0,0.45);">-11</div>
</div>
</body>
</html>
